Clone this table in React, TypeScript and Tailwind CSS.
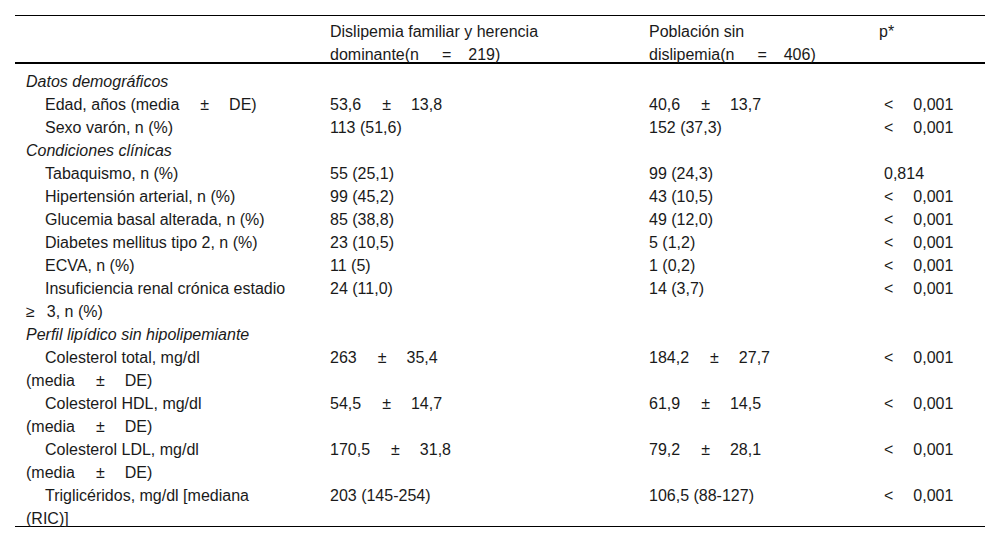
import React from 'react';

// hair-space style gap used between values and symbols
const Hs = ({ w = 'w-[20px]' }: { w?: string }) => <span className={`inline-block ${w}`} />;

// text in the source sits a few px lower in its line box than Liberation Sans does
const C = ({ children }: { children?: React.ReactNode }) => <div className="pt-[4px] -mb-[4px]">{children}</div>;

const PM = ({ a, b }: { a: string; b: string }) => (
  <span className="whitespace-nowrap">
    {a}
    <Hs w="w-[21px]" />±<Hs />
    {b}
  </span>
);

const MediaDE = () => (
  <span className="whitespace-nowrap">
    (media<Hs w="w-[21px]" />±<Hs />DE)
  </span>
);

const P001 = () => (
  <span className="whitespace-nowrap">
    &lt;<Hs />0,001
  </span>
);

type Row =
  | { section: string }
  | { label: React.ReactNode; a: React.ReactNode; b: React.ReactNode; p: React.ReactNode };

const rows: Row[] = [
  { section: 'Datos demográficos' },
  {
    label: (
      <>
        Edad, años <MediaDE />
      </>
    ),
    a: <PM a="53,6" b="13,8" />,
    b: <PM a="40,6" b="13,7" />,
    p: <P001 />,
  },
  { label: 'Sexo varón, n (%)', a: '113 (51,6)', b: '152 (37,3)', p: <P001 /> },
  { section: 'Condiciones clínicas' },
  { label: 'Tabaquismo, n (%)', a: '55 (25,1)', b: '99 (24,3)', p: '0,814' },
  { label: 'Hipertensión arterial, n (%)', a: '99 (45,2)', b: '43 (10,5)', p: <P001 /> },
  { label: 'Glucemia basal alterada, n (%)', a: '85 (38,8)', b: '49 (12,0)', p: <P001 /> },
  { label: 'Diabetes mellitus tipo 2, n (%)', a: '23 (10,5)', b: '5 (1,2)', p: <P001 /> },
  { label: 'ECVA, n (%)', a: '11 (5)', b: '1 (0,2)', p: <P001 /> },
  {
    label: (
      <>
        Insuficiencia renal crónica estadio{' '}
        <span className="whitespace-nowrap">
          ≥<Hs w="w-[12px]" />3,
        </span>{' '}
        n (%)
      </>
    ),
    a: '24 (11,0)',
    b: '14 (3,7)',
    p: <P001 />,
  },
  { section: 'Perfil lipídico sin hipolipemiante' },
  {
    label: (
      <>
        Colesterol total, mg/dl <MediaDE />
      </>
    ),
    a: <PM a="263" b="35,4" />,
    b: <PM a="184,2" b="27,7" />,
    p: <P001 />,
  },
  {
    label: (
      <>
        Colesterol HDL, mg/dl <MediaDE />
      </>
    ),
    a: <PM a="54,5" b="14,7" />,
    b: <PM a="61,9" b="14,5" />,
    p: <P001 />,
  },
  {
    label: (
      <>
        Colesterol LDL, mg/dl <MediaDE />
      </>
    ),
    a: <PM a="170,5" b="31,8" />,
    b: <PM a="79,2" b="28,1" />,
    p: <P001 />,
  },
  { label: 'Triglicéridos, mg/dl [mediana (RIC)]', a: '203 (145-254)', b: '106,5 (88-127)', p: <P001 /> },
];

export default function App() {
  return (
    <div className="min-h-screen bg-white pt-[15px] px-[15px] text-[16px] leading-[23px] text-[#1a1a1a] font-['Liberation_Sans',Arial,sans-serif]">
      <table className="w-[970px] table-fixed border-collapse border-t border-b border-black">
        <colgroup>
          <col className="w-[304px]" />
          <col className="w-[319px]" />
          <col className="w-[233px]" />
          <col className="w-[114px]" />
        </colgroup>
        <thead>
          <tr className="border-b-2 border-black align-top text-left">
            <th className="pl-[11px] font-normal">
              <C />
            </th>
            <th className="pl-[11px] pr-[20px] font-normal">
              <C>
                Dislipemia familiar y herencia{' '}
                <span className="whitespace-nowrap">
                  dominante(n<Hs w="w-[23px]" />=<Hs w="w-[17px]" />219)
                </span>
              </C>
            </th>
            <th className="pl-[11px] pr-[20px] font-normal">
              <C>
                Población sin{' '}
                <span className="whitespace-nowrap">
                  dislipemia(n<Hs w="w-[23px]" />=<Hs w="w-[17px]" />406)
                </span>
              </C>
            </th>
            <th className="pl-[8px] font-normal">
              <C>p*</C>
            </th>
          </tr>
        </thead>
        <tbody>
          {rows.map((r, i) =>
            'section' in r ? (
              <tr key={i}>
                <td colSpan={4} className={i === 0 ? 'pl-[11px] pt-[2px] italic' : 'pl-[11px] italic'}>
                  <C>{r.section}</C>
                </td>
              </tr>
            ) : (
              <tr key={i} className="align-top">
                <td className="pl-[11px] pr-[28px] indent-[19px]">
                  <C>{r.label}</C>
                </td>
                <td className="pl-[11px]">
                  <C>{r.a}</C>
                </td>
                <td className="pl-[11px]">
                  <C>{r.b}</C>
                </td>
                <td className="pl-[13px]">
                  <C>{r.p}</C>
                </td>
              </tr>
            )
          )}
        </tbody>
      </table>
    </div>
  );
}
